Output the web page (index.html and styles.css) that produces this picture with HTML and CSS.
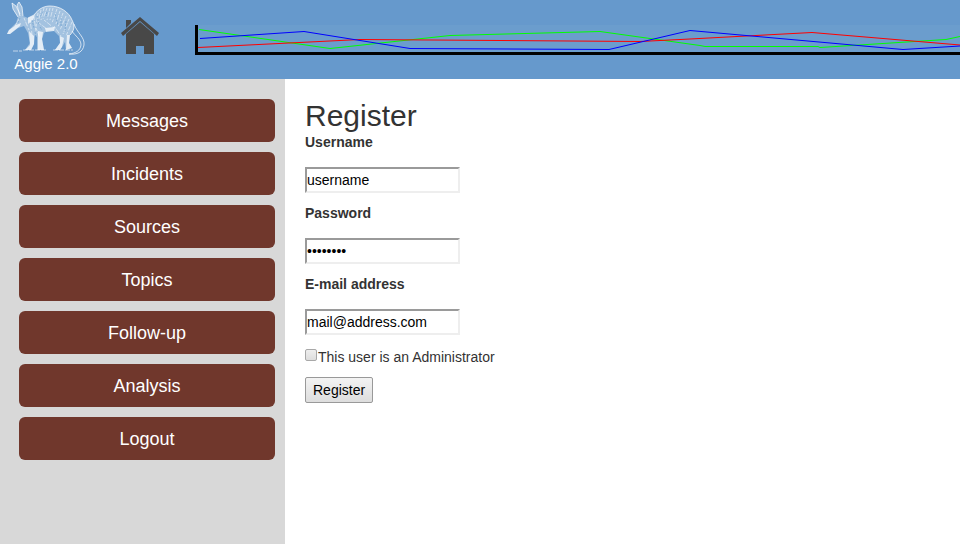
FILE: index.html
```html
<!DOCTYPE html>
<html lang="en">
<head>
<meta charset="utf-8">
<meta name="viewport" content="width=device-width, initial-scale=1">
<title>Aggie 2.0 - Register</title>
<link rel="stylesheet" href="styles.css">
</head>
<body>
<header class="topbar">
  <a class="brand" href="#">
    <svg class="brand-logo" viewBox="6 0 80 56" aria-hidden="true">
      <path class="fill" d="M7 34 L9 30 L16 23 L18 17 L13 9 L12 3 L16 6 L20 14 L17 5 L19 2 L22 7 L23 16 L28 18 L34 15 C39 8 45 6 50 6 C60 6 69 12 72 20 C76 27 73 32 70 35 L69 43 L72 48 L66 50 L65 42 L62 47 L60 50 L55 50 L60 43 L59 36 L54 31 C49 30 46 31 44 33 L42 39 L44 50 L37 50 L37 37 L35 35 L34 44 L31 50 L25 50 L30 43 L28 33 L24 26 L18 28 L10 34Z"/>
      <path class="bright" d="M7 34 L9 30 L16 25 L21 23 L20 26 L10 34Z M29 31 L34 36 L34 44 L31 50 L25 50 L30 45Z M38 31 L43 32 L42 39 L44 50 L38 50Z M45 28 L55 27 L54 31 L46 32Z M60 36 L64 38 L62 47 L60 50 L55 50 L60 43Z M67 35 L70 35 L69 43 L72 48 L66 50Z M28 18 L35 15 L33 20 L28 24Z"/>
      <path class="line" d="M18 17 L13 9 L12 3 L16 6 L20 14 M23 16 L22 7 L19 2 L17 5 L20 16 M28 18 L34 15 C39 8 45 6 50 6 C60 6 69 12 72 20 C76 27 73 32 70 35 M74 24 C77 33 85 37 84 45 C83 52 77 55 69 54 M72 31 C75 36 81 39 81 45 C80 51 76 53 69 54"/>
      <path class="ground" d="M13 51 H22 M23 50 H46 M53 50 H73"/>
      <path class="hatch" d="M19 19 L15 26 M24 18 L29 30 M30 20 L32 34 M34 17 L36 32 M38 13 L36 27 M41 10 L38 23 M44 8 L41 20 M47 8 L43 19 M50 8 L47 20 M53 8 L50 20 M57 9 L52 23 M60 11 L56 24 M63 13 L58 27 M66 16 L60 30 M69 19 L63 34 M72 22 L66 36 M39 23 L47 29 M44 20 L54 28 M36 28 L40 38 M54 26 L61 36"/>
      <path class="shade" d="M20 18 L18 23 M32 20 L34 28 M37 16 L39 25 M43 12 L40 17 M55 14 L58 25 M61 18 L61 27 M66 21 L65 31 M35 32 L36 36 M47 12 L46 16 M40 27 L42 30"/>
    </svg>
    <span>Aggie 2.0</span>
  </a>
  <a class="home" href="#" aria-label="Home">
    <svg viewBox="0 0 40 38" aria-hidden="true">
      <path d="M6 3H11V6L6 11ZM20 0L39 16L37 19L20 4L3 19L1 16ZM20 5L34 17V37H24V29H16V37H6V17Z"/>
    </svg>
  </a>
  <div class="chart">
    <svg viewBox="0 0 762 27" preserveAspectRatio="xMinYMin slice" role="img" aria-label="Activity trends">
      <polyline class="green" points="1,4.5 132,23.5 252,10.5 402,6.5 502,20.5 507,21.5 620,21.5 622,22.5 748,14.5 762,11.5"/>
      <polyline class="red" points="0,22.5 162,14.5 442,16.5 492,14 614,7.5 762,20"/>
      <polyline class="blue" points="2,13.5 106,6.5 212,23.5 411,24.5 492,5.5 705,24.5 762,21"/>
    </svg>
  </div>
</header>
<div class="layout">
  <nav class="sidebar" aria-label="Main">
    <a href="#">Messages</a>
    <a href="#">Incidents</a>
    <a href="#">Sources</a>
    <a href="#">Topics</a>
    <a href="#">Follow-up</a>
    <a href="#">Analysis</a>
    <a href="#">Logout</a>
  </nav>
  <main class="content">
    <h1>Register</h1>
    <form>
      <div class="field">
        <label for="username">Username</label>
        <input id="username" type="text" value="username">
      </div>
      <div class="field">
        <label for="password">Password</label>
        <input id="password" type="password" value="password">
      </div>
      <div class="field">
        <label for="email">E-mail address</label>
        <input id="email" type="email" value="mail@address.com">
      </div>
      <div class="check">
        <input id="admin" type="checkbox">
        <label for="admin">This user is an Administrator</label>
      </div>
      <button type="submit">Register</button>
    </form>
  </main>
</div>
</body>
</html>
```
FILE: styles.css
```css
* {
  box-sizing: border-box;
}

body {
  margin: 0;
  min-height: 100vh;
  display: flex;
  flex-direction: column;
  background: #fff;
  color: #333;
  font: 14px/20px "Liberation Sans", Arial, sans-serif;
}

.topbar {
  display: flex;
  align-items: flex-start;
  padding-bottom: 7px;
  background: #6699cc;
}

.brand {
  display: flex;
  flex-direction: column;
  align-items: center;
  width: 92px;
  color: #fff;
  font-size: 15px;
  line-height: 16px;
  text-decoration: none;
}

.brand-logo {
  width: 80px;
  height: 56px;
}

.fill {
  fill: #fff;
  fill-opacity: 0.4;
}

.bright {
  fill: #fff;
  fill-opacity: 0.7;
}

.line,
.ground,
.hatch,
.shade {
  fill: none;
  stroke: #fff;
  stroke-linejoin: round;
}

.line {
  stroke-opacity: 0.7;
}

.ground {
  stroke-dasharray: 5 1;
  stroke-opacity: 0.6;
}

.hatch {
  stroke-dasharray: 3 1 5 2;
  stroke-opacity: 0.5;
}

.shade {
  stroke: #6699cc;
  stroke-dasharray: 2 1;
  stroke-opacity: 0.6;
}

.home {
  margin: 17px 35px 0 28px;
}

.home svg {
  display: block;
  width: 40px;
  height: 38px;
  fill: #484848;
}

.chart {
  flex: 1;
  height: 30px;
  margin-top: 25px;
  overflow: hidden;
  border: solid #000;
  border-width: 0 0 3px 3px;
  background: #6b9dcd;
}

.chart svg {
  display: block;
  width: 100%;
  height: 27px;
}

.chart polyline {
  fill: none;
  stroke-width: 1;
}

.green {
  stroke: #0f0;
}

.red {
  stroke: #f00;
}

.blue {
  stroke: #00f;
}

.layout {
  flex: 1;
  display: flex;
}

.sidebar {
  display: flex;
  flex-direction: column;
  gap: 10px;
  width: 285px;
  padding: 20px 10px 20px 19px;
  background: #d8d8d8;
}

.sidebar a {
  padding: 11px 10px 9px;
  border-radius: 6px;
  background: #70372c;
  color: #fff;
  font-size: 18px;
  line-height: 23px;
  text-align: center;
  text-decoration: none;
}

.content {
  flex: 1;
  padding: 20px;
}

h1 {
  margin: 0;
  font-size: 30px;
  font-weight: 400;
  line-height: 33px;
}

.field {
  display: flex;
  flex-direction: column;
  align-items: flex-start;
  gap: 15px;
  margin-bottom: 10px;
}

.field label {
  font-weight: 700;
}

.field input {
  width: 155px;
  height: 26px;
  padding: 1px 0;
  border: 2px solid;
  border-color: #9a9a9a #eee #eee #9a9a9a;
  background: #fff;
  color: #000;
  font: inherit;
}

.check {
  display: flex;
  align-items: center;
  gap: 1px;
  margin: 12px 0 10px;
}

.check input {
  appearance: none;
  width: 12px;
  height: 12px;
  margin: 0 0 4px;
  border: 1px solid #a8a8a8;
  border-radius: 2px;
  background: linear-gradient(#eee, #ddd);
}

.check input:checked {
  background: #555;
}

button {
  height: 26px;
  padding: 0 7px;
  border: 1px solid #999;
  border-radius: 2px;
  background: linear-gradient(#f3f3f3, #ddd);
  color: #000;
  font: inherit;
}
```
